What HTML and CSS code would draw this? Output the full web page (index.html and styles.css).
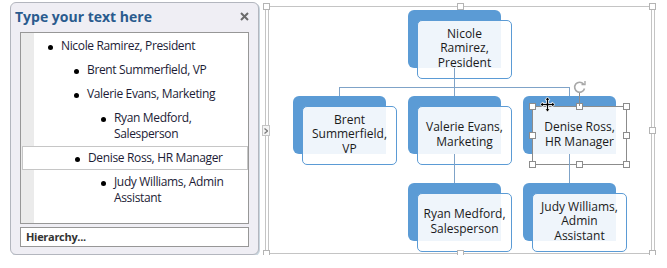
FILE: index.html
```html
<!DOCTYPE html>
<html lang="en">
<head>
    <meta charset="UTF-8">
    <title>SmartArt - Hierarchy</title>
    <link rel="stylesheet" href="styles.css">
</head>
<body>
    <div class="page">
        <div class="text-pane">
            <div class="pane-head">
                <span class="pane-title">Type your text here</span>
                <svg class="pane-close" width="9" height="9" viewBox="0 0 9 9">
                    <path d="M1 1 L8 8 M8 1 L1 8" stroke="#6b6b6b" stroke-width="2"/>
                </svg>
            </div>
            <ul class="outline">
                <li class="lvl1">Nicole Ramirez, President</li>
                <li class="lvl2">Brent Summerfield, VP</li>
                <li class="lvl2">Valerie Evans, Marketing</li>
                <li class="lvl3">Ryan Medford, Salesperson</li>
                <li class="lvl2 current">Denise Ross, HR Manager</li>
                <li class="lvl3">Judy Williams, Admin Assistant</li>
            </ul>
            <div class="pane-foot">Hierarchy...</div>
        </div>

        <div class="canvas">
            <!-- connectors -->
            <div class="line v" style="left:189px; top:62px; height:19px;"></div>
            <div class="line h" style="left:74px; top:81px; width:231px;"></div>
            <div class="line v" style="left:74px; top:81px; height:9px;"></div>
            <div class="line v" style="left:189px; top:81px; height:9px;"></div>
            <div class="line v" style="left:304px; top:81px; height:9px;"></div>
            <div class="line v" style="left:189px; top:148px; height:29px;"></div>
            <div class="line v" style="left:304px; top:148px; height:29px;"></div>

            <div class="node" style="left:143px; top:4px;">
                <div class="node-back"></div>
                <div class="node-box">Nicole<br>Ramirez,<br>President</div>
            </div>
            <div class="node" style="left:28px; top:90px;">
                <div class="node-back"></div>
                <div class="node-box">Brent<br>Summerfield,<br>VP</div>
            </div>
            <div class="node" style="left:143px; top:90px;">
                <div class="node-back"></div>
                <div class="node-box">Valerie Evans,<br>Marketing</div>
            </div>
            <div class="node selected" style="left:258px; top:90px;">
                <div class="node-back"></div>
                <div class="node-box">Denise Ross,<br>HR Manager
                    <span class="grip tl"></span><span class="grip tm"></span><span class="grip tr"></span>
                    <span class="grip ml"></span><span class="grip mr"></span>
                    <span class="grip bl"></span><span class="grip bm"></span><span class="grip br"></span>
                </div>
                <div class="rotate-stem"></div>
                <svg class="rotate" width="14" height="14" viewBox="0 0 14 14">
                    <path d="M10.5 4 A5 5 0 1 0 11.5 8.5" fill="none" stroke="#a8a8a8" stroke-width="1.6"/>
                    <path d="M8.5 4.5 L12 4.5 L12 1" fill="none" stroke="#a8a8a8" stroke-width="1.4"/>
                </svg>
                <svg class="move" width="17" height="17" viewBox="0 0 17 17">
                    <path d="M8.5 1 L11 4 L9.5 4 L9.5 7.5 L13 7.5 L13 6 L16 8.5 L13 11 L13 9.5 L9.5 9.5 L9.5 13 L11 13 L8.5 16 L6 13 L7.5 13 L7.5 9.5 L4 9.5 L4 11 L1 8.5 L4 6 L4 7.5 L7.5 7.5 L7.5 4 L6 4 Z" fill="#000" stroke="#fff" stroke-width="0.8"/>
                </svg>
            </div>
            <div class="node" style="left:143px; top:177px;">
                <div class="node-back"></div>
                <div class="node-box">Ryan Medford,<br>Salesperson</div>
            </div>
            <div class="node" style="left:258px; top:177px;">
                <div class="node-back"></div>
                <div class="node-box">Judy Williams,<br>Admin<br>Assistant</div>
            </div>

            <span class="handle" style="left:-2px; top:-3px;"></span>
            <span class="handle" style="left:192px; top:-3px;"></span>
            <span class="handle" style="left:384px; top:-3px;"></span>
            <span class="handle" style="left:384px; top:121px;"></span>
            <span class="handle" style="left:-2px; top:244px;"></span>
            <span class="handle" style="left:192px; top:244px;"></span>
            <span class="handle" style="left:384px; top:244px;"></span>
            <span class="expand">
                <svg width="4" height="6" viewBox="0 0 4 6"><path d="M0.5 0.5 L3.5 3 L0.5 5.5" fill="none" stroke="#7a7a7a" stroke-width="1.3"/></svg>
            </span>
        </div>
    </div>
</body>
</html>
```

FILE: styles.css
```css
body {
    margin: 0;
    background: #fff;
    font-family: "Open Sans", "Noto Sans", sans-serif;
}
.page {
    display: flex;
    align-items: flex-start;
    padding: 2px 0 0 10px;
}

/* text pane */
.text-pane {
    width: 249px;
    height: 253px;
    box-sizing: border-box;
    border: 1px solid #b3b6be;
    border-radius: 6px;
    background: #efeef4;
    box-shadow: 1px 1px 0 #c9d6df;
    padding: 0 9px;
    display: flex;
    flex-direction: column;
}
.pane-head {
    height: 29px;
    margin-left: -5px;
    display: flex;
    align-items: center;
    justify-content: space-between;
}
.pane-title {
    font-size: 14px;
    font-weight: bold;
    color: #2a5b8e;
    margin-top: -2px;
}
.pane-close {
    margin-top: -2px;
}
.outline {
    height: 192px;
    box-sizing: border-box;
    margin: 0;
    padding: 1px 0 0;
    list-style: none;
    border: 1px solid #979797;
    background: linear-gradient(to right, #ebebeb 13px, #fff 13px);
    font-size: 12px;
    line-height: 16px;
    letter-spacing: -0.35px;
    color: #1c1c36;
}
.outline li {
    position: relative;
    padding: 4px 8px 4px 0;
}
.outline li::before {
    content: "";
    position: absolute;
    top: 11px;
    width: 5px;
    height: 5px;
    border-radius: 50%;
    background: #000;
}
.outline .lvl1 { padding-left: 40px; }
.outline .lvl2 { padding-left: 66px; }
.outline .lvl3 { padding-left: 93px; }
.outline .lvl1::before { left: 27px; }
.outline .lvl2::before { left: 53px; }
.outline .lvl3::before { left: 80px; }
.outline .current {
    margin-left: 1px;
    padding-top: 3px;
    padding-bottom: 3px;
    border: 1px solid #c6c6c6;
    background: #fff;
}
.outline .current.lvl2 { padding-left: 65px; }
.outline .current.lvl2::before { left: 52px; top: 10px; }
.pane-foot {
    margin-top: 3px;
    height: 20px;
    box-sizing: border-box;
    border: 1px solid #979797;
    background: #fff;
    padding-left: 5px;
    font-size: 11px;
    line-height: 18px;
    letter-spacing: -0.3px;
    font-weight: bold;
    color: #333;
}

/* diagram canvas */
.canvas {
    position: relative;
    width: 390px;
    height: 248px;
    margin: 4px 0 0 6px;
}
.canvas::before {
    content: "";
    position: absolute;
    inset: 0;
    border-left: 4px double #c4c4c4;
    border-right: 4px double #c4c4c4;
    border-top: 1px solid #c4c4c4;
    border-bottom: 1px solid #c4c4c4;
}
.line {
    position: absolute;
    background: #7fa3c8;
    z-index: 2;
}
.line.v { width: 1px; }
.line.h { height: 1px; }

.node {
    position: absolute;
    width: 104px;
    height: 69px;
}
.node-back {
    position: absolute;
    left: 0;
    top: 0;
    width: 93px;
    height: 58px;
    background: #5b9bd5;
    border-radius: 6px 6px 0 6px;
}
.node-box {
    position: absolute;
    left: 9px;
    top: 10px;
    width: 95px;
    height: 59px;
    box-sizing: border-box;
    border: 1px solid #5b9bd5;
    border-radius: 5px;
    background: rgba(255, 255, 255, 0.9);
    display: flex;
    align-items: center;
    justify-content: center;
    text-align: center;
    font-size: 12px;
    line-height: 14.5px;
    color: #1a1a1a;
    padding-bottom: 2px;
}
.selected .node-box {
    border-color: #8c8c8c;
    border-radius: 0;
}
.grip, .handle {
    position: absolute;
    width: 7px;
    height: 7px;
    box-sizing: border-box;
    background: #fff;
    border: 1px solid #8c8c8c;
    z-index: 3;
}
.handle { border-color: #b4b4b4; }
.grip.tl { left: -4px; top: -4px; }
.grip.tm { left: 43px; top: -4px; }
.grip.tr { right: -4px; top: -4px; }
.grip.ml { left: -4px; top: 25px; }
.grip.mr { right: -4px; top: 25px; }
.grip.bl { left: -4px; bottom: -4px; }
.grip.bm { left: 43px; bottom: -4px; }
.grip.br { right: -4px; bottom: -4px; }
.rotate-stem {
    position: absolute;
    left: 56px;
    top: -3px;
    width: 1px;
    height: 13px;
    background: #8c8c8c;
    z-index: 3;
}
.rotate {
    position: absolute;
    left: 50px;
    top: -16px;
    z-index: 3;
}
.move {
    position: absolute;
    left: 16px;
    top: 0;
    z-index: 4;
}
.expand {
    position: absolute;
    left: -3px;
    top: 119px;
    width: 8px;
    height: 11px;
    box-sizing: border-box;
    background: #f4f4f4;
    border: 1px solid #c4c4c4;
    display: flex;
    align-items: center;
    justify-content: center;
    z-index: 3;
}
.expand svg { display: block; }
```
